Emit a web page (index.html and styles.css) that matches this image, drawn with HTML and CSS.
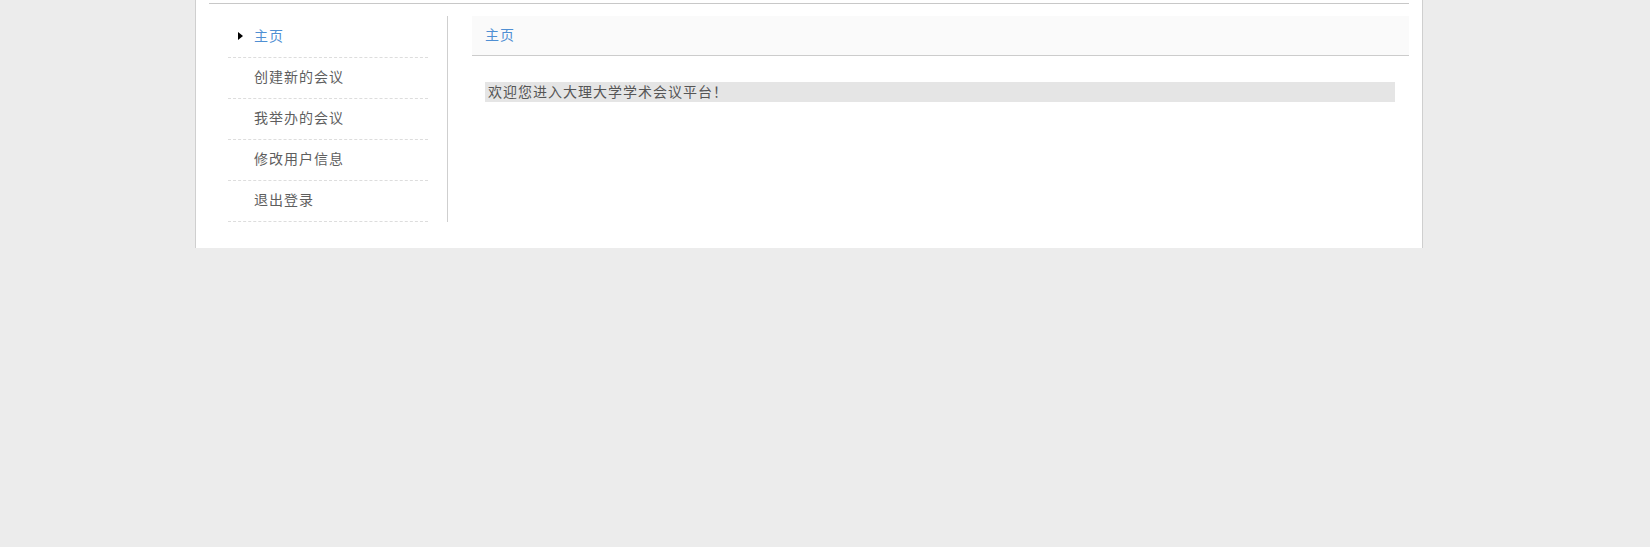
FILE: index.html
```html
<!DOCTYPE html>
<html lang="zh-CN">
<head>
<meta charset="utf-8">
<title>主页</title>
<link rel="stylesheet" href="styles.css">
</head>
<body>
<div class="page">
  <div class="top-rule"></div>
  <div class="layout">
    <aside class="sidebar">
      <ul class="menu">
        <li class="menu-item active"><span class="arrow"></span>主页</li>
        <li class="menu-item">创建新的会议</li>
        <li class="menu-item">我举办的会议</li>
        <li class="menu-item">修改用户信息</li>
        <li class="menu-item">退出登录</li>
      </ul>
    </aside>
    <main class="content">
      <div class="content-head">主页</div>
      <div class="welcome">欢迎您进入大理大学学术会议平台！</div>
    </main>
  </div>
</div>
</body>
</html>
```

FILE: styles.css
```css
html, body {
  margin: 0;
  padding: 0;
}
body {
  background: #ececec;
  font-family: "Noto Sans CJK SC", "Noto Sans", sans-serif;
  font-size: 14px;
  color: #666;
}
.page {
  margin-left: 195px;
  width: 1200px;
  background: #fff;
  border-left: 1px solid #cfcfcf;
  border-right: 1px solid #cfcfcf;
  padding: 3px 13px 26px 13px;
}
.top-rule {
  height: 1px;
  background: #c8c8c8;
}
.layout {
  display: flex;
  margin-top: 12px;
}
.sidebar {
  width: 200px;
  padding: 0 19px;
  border-right: 1px solid #cfcfcf;
}
.menu {
  list-style: none;
  margin: 0;
  padding: 1px 0 0 0;
}
.menu-item {
  position: relative;
  height: 36px;
  line-height: 36px;
  padding: 0 0 4px 26px;
  border-bottom: 1px dashed #dddddd;
  color: #5e5e5e;
  letter-spacing: 1px;
}
.menu-item.active {
  color: #4f8fd3;
}
.arrow {
  position: absolute;
  left: 10px;
  top: 15px;
  width: 0;
  height: 0;
  border-top: 4.5px solid transparent;
  border-bottom: 4.5px solid transparent;
  border-left: 5px solid #000;
}
.content {
  flex: 1;
  margin-left: 24px;
}
.content-head {
  height: 37px;
  line-height: 37px;
  padding: 0 0 2px 13px;
  background: #fafafa;
  border-bottom: 1px solid #cccccc;
  color: #4f8fd3;
  letter-spacing: 1px;
}
.welcome {
  margin: 26px 14px 0 13px;
  height: 19px;
  line-height: 19px;
  padding: 0 0 1px 3px;
  background: #e5e5e5;
  color: #555;
  letter-spacing: 1px;
}
```
